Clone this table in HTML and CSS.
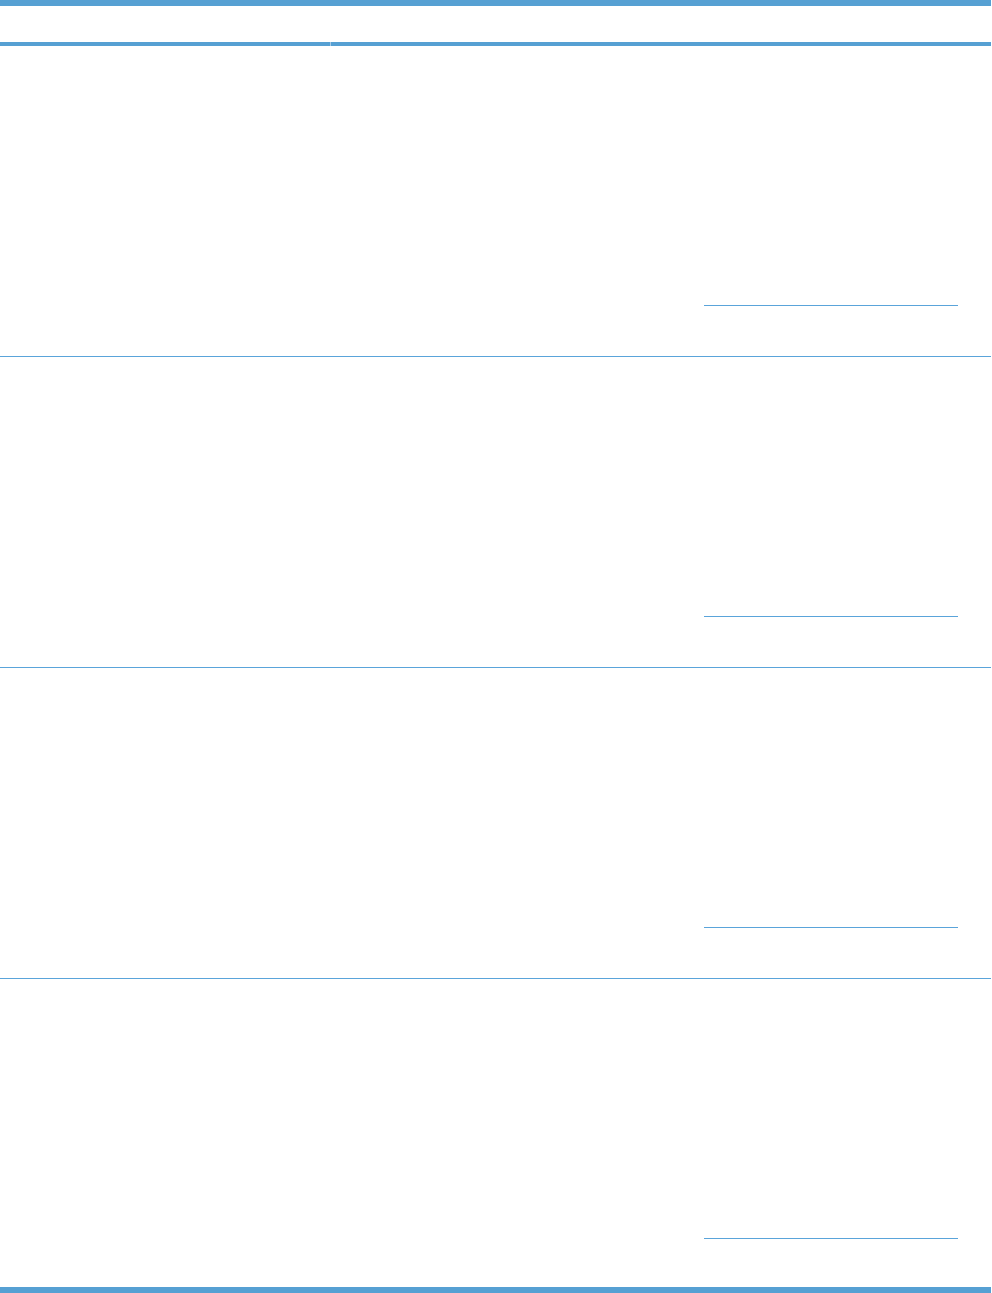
FILE: index.html
```html
<!DOCTYPE html>
<html lang="en">
<head>
  <meta charset="UTF-8" />
  <meta name="viewport" content="width=device-width, initial-scale=1.0" />
  <title>Form Table</title>
  <link rel="stylesheet" href="styles.css">
</head>
<body>
  <div class="sheet">
    <div class="head">
      <div class="head-cell col-a"></div>
      <div class="head-cell col-b"></div>
    </div>
    <div class="row">
      <div class="cell col-a"></div>
      <div class="cell col-b"></div>
      <div class="cell col-c"><div class="sign-line"></div></div>
    </div>
    <div class="row">
      <div class="cell col-a"></div>
      <div class="cell col-b"></div>
      <div class="cell col-c"><div class="sign-line"></div></div>
    </div>
    <div class="row">
      <div class="cell col-a"></div>
      <div class="cell col-b"></div>
      <div class="cell col-c"><div class="sign-line"></div></div>
    </div>
    <div class="row last">
      <div class="cell col-a"></div>
      <div class="cell col-b"></div>
      <div class="cell col-c"><div class="sign-line"></div></div>
    </div>
  </div>
</body>
</html>
```

FILE: styles.css
```css
* {
  box-sizing: border-box;
  margin: 0;
  padding: 0;
}
body {
  font-family: 'Liberation Sans', Arial, sans-serif;
  background: #fff;
  color: #333;
}
.sheet {
  width: 991px;
  border-top: 6px solid #56a0d3;
  border-bottom: 6px solid #56a0d3;
}
.head {
  display: flex;
  gap: 1px;
  height: 40px;
  background: linear-gradient(to bottom, #fff 36px, #a6cbe8 36px);
}
.head-cell {
  background: #fff;
  border-bottom: 4px solid #56a0d3;
}
.head-cell.col-a {
  width: 330px;
}
.head-cell.col-b {
  flex: 1;
}
.row {
  display: flex;
  height: 311px;
  border-bottom: 1px solid #5aa4da;
}
.row.last {
  height: 308px;
  border-bottom: none;
}
.col-a {
  width: 330px;
}
.col-b {
  width: 360px;
}
.col-c {
  flex: 1;
  padding: 259px 33px 0 14px;
}
.sign-line {
  border-bottom: 1px solid #5aa4da;
}
```
